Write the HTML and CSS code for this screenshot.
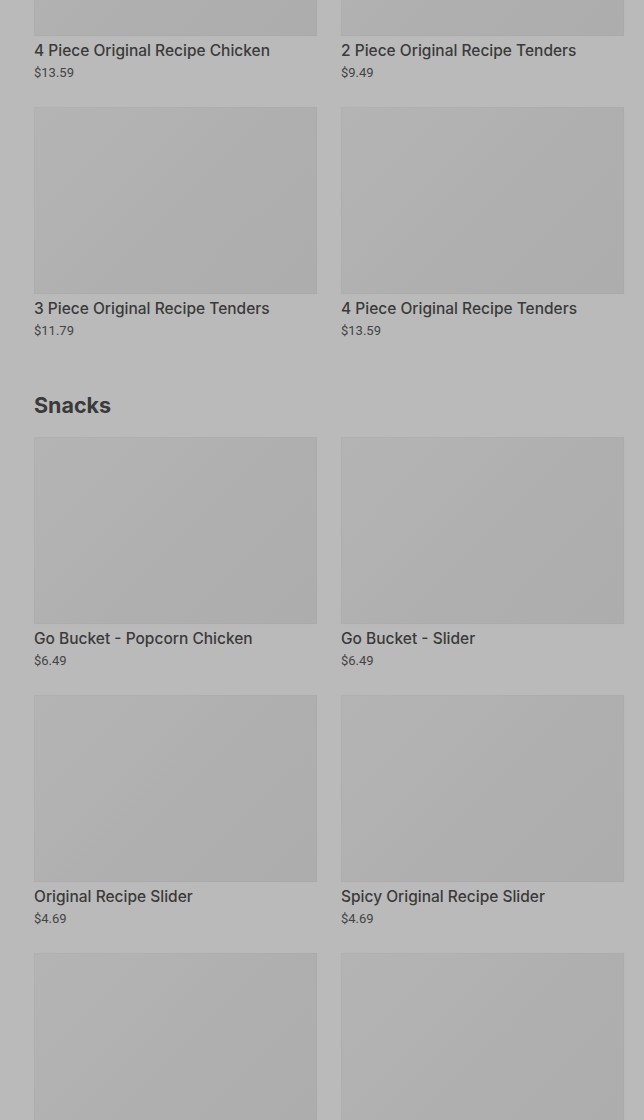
FILE: index.html
```html
<!DOCTYPE html>
<html>
<head>
<meta charset="utf-8">
<link rel="stylesheet" href="styles.css">
</head>
<body>
<main class="menu">
  <section class="section first">
    <div class="grid">
      <div class="card"><div class="thumb"></div><div class="name">4 Piece Original Recipe Chicken</div><div class="price">$13.59</div></div>
      <div class="card"><div class="thumb"></div><div class="name">2 Piece Original Recipe Tenders</div><div class="price">$9.49</div></div>
      <div class="card"><div class="thumb"></div><div class="name">3 Piece Original Recipe Tenders</div><div class="price">$11.79</div></div>
      <div class="card"><div class="thumb"></div><div class="name">4 Piece Original Recipe Tenders</div><div class="price">$13.59</div></div>
    </div>
  </section>
  <section class="section">
    <h2 class="heading">Snacks</h2>
    <div class="grid">
      <div class="card"><div class="thumb"></div><div class="name">Go Bucket - Popcorn Chicken</div><div class="price">$6.49</div></div>
      <div class="card"><div class="thumb"></div><div class="name">Go Bucket - Slider</div><div class="price">$6.49</div></div>
      <div class="card"><div class="thumb"></div><div class="name">Original Recipe Slider</div><div class="price">$4.69</div></div>
      <div class="card"><div class="thumb"></div><div class="name">Spicy Original Recipe Slider</div><div class="price">$4.69</div></div>
      <div class="card"><div class="thumb"></div><div class="name">&nbsp;</div><div class="price">&nbsp;</div></div>
      <div class="card"><div class="thumb"></div><div class="name">&nbsp;</div><div class="price">&nbsp;</div></div>
    </div>
  </section>
</main>
</body>
</html>
```

FILE: styles.css
```css
html, body {
  margin: 0;
  padding: 0;
  background: #bababa;
  overflow: hidden;
}
body {
  font-family: Inter, "Noto Sans", sans-serif;
  color: #3b3b3b;
}
.menu {
  padding: 0 20px 0 34px;
}
.section.first {
  margin-top: -151px;
}
.grid {
  display: grid;
  grid-template-columns: 1fr 1fr;
  grid-auto-rows: 233px;
  column-gap: 24px;
  row-gap: 25px;
}
.thumb {
  height: 187px;
  background: linear-gradient(135deg, #b4b4b4 0%, #b2b2b2 30%, #afafaf 55%, #adadad 100%);
  box-shadow: inset 0 0 2px rgba(0, 0, 0, 0.05), 0 0 1px rgba(0, 0, 0, 0.04);
}
.name {
  margin-top: 5px;
  height: 20px;
  font-size: 15.5px;
  font-weight: 500;
  line-height: 20px;
  color: #3a3a3a;
  white-space: nowrap;
}
.price {
  margin-top: 3px;
  height: 18px;
  font-family: Roboto, "Liberation Sans", sans-serif;
  font-size: 13px;
  line-height: 18px;
  color: #444;
}
.heading {
  margin: 52px 0 19px;
  height: 26px;
  font-size: 21.5px;
  font-weight: 700;
  line-height: 26px;
  color: #3a3a3a;
}
```
